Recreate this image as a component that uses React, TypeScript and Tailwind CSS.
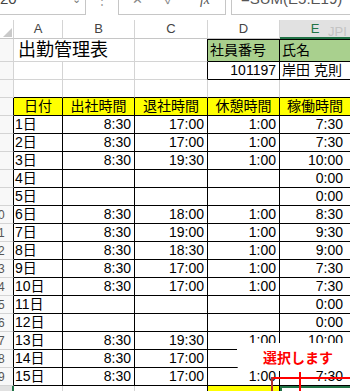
import React from 'react';

// gridline / table border colours
const G = 'border-[#d4d4d4]';
const K = 'border-black';
const CELL = 'shrink-0 h-full flex items-center border-b overflow-hidden whitespace-nowrap';
const COLS = ['w-[14px]', 'w-[49px]', 'w-[72px]', 'w-[73px]', 'w-[72px]', 'flex-1'];

const days: string[][] = [
  ['1日', '8:30', '17:00', '1:00', '7:30'],
  ['2日', '8:30', '17:00', '1:00', '7:30'],
  ['3日', '8:30', '19:30', '1:00', '10:00'],
  ['4日', '', '', '', '0:00'],
  ['5日', '', '', '', '0:00'],
  ['6日', '8:30', '18:00', '1:00', '8:30'],
  ['7日', '8:30', '19:00', '1:00', '9:30'],
  ['8日', '8:30', '18:30', '1:00', '9:00'],
  ['9日', '8:30', '17:00', '1:00', '7:30'],
  ['10日', '8:30', '17:00', '1:00', '7:30'],
  ['11日', '', '', '', '0:00'],
  ['12日', '', '', '', '0:00'],
  ['13日', '8:30', '19:30', '1:00', '10:00'],
  ['14日', '8:30', '17:00', '1:00', '7:30'],
  ['15日', '8:30', '17:00', '1:00', '7:30'],
];

function RowHead({ n, right = G }: { n: number; right?: string }) {
  return (
    <div className={`${CELL} ${COLS[0]} border-r ${right} ${G} bg-[#f8f8f8] text-[12px] text-[#555]`}>
      <span className="-ml-[2px]">{n >= 10 ? String(n % 10) : ''}</span>
    </div>
  );
}

function FormulaBar() {
  return (
    <div className="h-[30px] -mt-[15px] flex text-[15px] text-[#444]">
      <div className="w-[86px] flex items-center justify-between border-r border-b border-[#c6c6c6] pr-[4px]">
        <span>20</span>
        <span className="text-[11px] text-[#777]">⌄</span>
      </div>
      <div className="w-[32px] flex items-center justify-center text-[#999] text-[12px]">⋮</div>
      <div className="w-[108px] flex items-center border-l border-r border-b border-[#c6c6c6] text-[#888]">
        <span className="ml-[13px] text-[13px]">✕</span>
        <span className="ml-[22px] text-[13px]">✓</span>
        <span className="ml-[26px] italic font-['Liberation_Serif',serif] text-[14px] text-[#555]">fx</span>
      </div>
      <div className="w-[5px]" />
      <div className="flex-1 flex items-center border-l border-b border-[#c6c6c6] pl-[9px] text-[#555]">
        =SUM(E5:E19)
      </div>
    </div>
  );
}

function ColumnHeader() {
  const letters = ['A', 'B', 'C', 'D'];
  return (
    <div className="mt-[5px] h-[19px] flex text-[13px] text-[#444]">
      <div className={`${CELL} ${COLS[0]} border-r ${G} border-b-[#c6c6c6] justify-end items-end pb-[1px] pr-[1px]`}>
        <svg width="9" height="9" viewBox="0 0 9 9">
          <polygon points="9,0 9,9 0,9" fill="#c9c9c9" />
        </svg>
      </div>
      {letters.map((l, i) => (
        <div key={l} className={`${CELL} ${COLS[i + 1]} border-r ${G} border-b-[#c6c6c6] justify-center`}>
          {l}
        </div>
      ))}
      <div className={`${CELL} ${COLS[5]} border-b-2 border-[#217346] bg-[#e1e1e1] justify-center text-[#217346]`}>
        E
      </div>
    </div>
  );
}

export default function App() {
  return (
    <div className="relative w-[350px] h-[391px] overflow-hidden bg-white text-black font-['Liberation_Sans','Noto_Sans_CJK_JP',sans-serif] text-[14px]">
      <FormulaBar />
      <ColumnHeader />

      {/* row 1 */}
      <div className="h-[23px] flex">
        <RowHead n={1} />
        <div className={`${CELL} ${COLS[1]} ${G} overflow-visible items-end`}>
          <span className="pl-[4px] text-[18px] leading-[22px]">出勤管理表</span>
        </div>
        <div className={`${CELL} ${COLS[2]} border-r ${G}`} />
        <div className={`${CELL} ${COLS[3]} border-r ${K} border-b-[#d4d4d4]`} />
        <div className={`${CELL} ${COLS[4]} border-r border-t ${K} bg-[#a9d08e] pl-[2px]`}>社員番号</div>
        <div className={`${CELL} ${COLS[5]} border-t ${K} bg-[#a9d08e] pl-[2px]`}>氏名</div>
      </div>

      {/* row 2 */}
      <div className="h-[18px] flex">
        <RowHead n={2} />
        <div className={`${CELL} ${COLS[1]} border-r ${G}`} />
        <div className={`${CELL} ${COLS[2]} border-r ${G}`} />
        <div className={`${CELL} ${COLS[3]} border-r ${K} border-b-[#d4d4d4]`} />
        <div className={`${CELL} ${COLS[4]} border-r ${K} justify-end pr-[3px]`}>101197</div>
        <div className={`${CELL} ${COLS[5]} ${K} pl-[2px]`}>岸田 克則</div>
      </div>

      {/* row 3 */}
      <div className="h-[18px] flex">
        <RowHead n={3} />
        <div className={`${CELL} ${COLS[1]} border-r ${G} border-b-black`} />
        <div className={`${CELL} ${COLS[2]} border-r ${G} border-b-black`} />
        <div className={`${CELL} ${COLS[3]} border-r ${G} border-b-black`} />
        <div className={`${CELL} ${COLS[4]} border-r ${G} border-b-black`} />
        <div className={`${CELL} ${COLS[5]} border-b-black`} />
      </div>

      {/* row 4 header */}
      <div className="h-[18px] flex">
        <RowHead n={4} right="border-r-black" />
        {['日付', '出社時間', '退社時間', '休憩時間', '稼働時間'].map((t, i) => (
          <div key={t} className={`${CELL} ${COLS[i + 1]} ${i < 4 ? 'border-r' : ''} ${K} bg-[#ffff00] justify-center`}>
            {t}
          </div>
        ))}
      </div>

      {days.map((d, r) => (
        <div key={d[0]} className="h-[18px] flex">
          <RowHead n={r + 5} right="border-r-black" />
          {d.map((v, i) => (
            <div
              key={i}
              className={`${CELL} ${COLS[i + 1]} ${i < 4 ? 'border-r' : ''} ${K} ${
                i === 0 ? 'pl-[1px]' : i === 4 ? 'justify-end pr-[7px]' : 'justify-end pr-[3px]'
              }`}
            >
              {v}
            </div>
          ))}
        </div>
      ))}

      {/* row 20 */}
      <div className="h-[18px] flex">
        <div className={`${CELL} ${COLS[0]} border-r-2 border-r-[#217346] ${G} bg-[#e1e1e1]`} />
        <div className={`${CELL} ${COLS[1]} border-r ${G}`} />
        <div className={`${CELL} ${COLS[2]} border-r ${G}`} />
        <div className={`${CELL} ${COLS[3]} border-r ${K}`} />
        <div className={`${CELL} ${COLS[4]} border-r ${K} bg-[#ffff00] pl-[6px] items-start pt-[3px]`}>合計</div>
        <div className={`${CELL} ${COLS[5]} border-t-2 border-l-2 border-[#217346]`} />
      </div>

      {/* stray IME text over column E header */}
      <span className="absolute left-[328px] top-[22px] text-[13px] text-[#c4c4c4]">JPI</span>

      {/* annotation callout */}
      <div className="absolute left-[237px] top-[343px] w-[122px] h-[28px] bg-white rounded-[6px] flex items-center justify-center">
        <span className="text-[14px] font-bold text-[#ff0000] font-['Noto_Sans_CJK_JP',sans-serif]">選択します</span>
      </div>
      <div className="absolute left-[272px] top-[377px] w-[80px] h-[2px] bg-[#ff0000]" />
      <div className="absolute left-[271px] top-[377px] w-[2px] h-[16px] bg-[#b03030]" />
      <div className="absolute left-[299px] top-[372px] w-[2px] h-[20px] bg-[#ff0000]" />
    </div>
  );
}
